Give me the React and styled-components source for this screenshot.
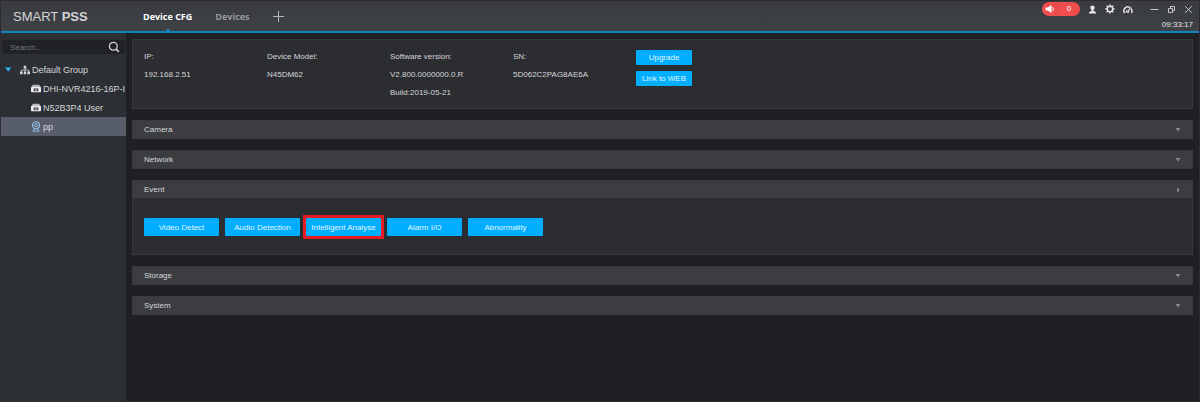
import React from "react";
import styled, { createGlobalStyle } from "styled-components";

const GlobalStyle = createGlobalStyle`
  * {
    box-sizing: border-box;
  }

  body {
    margin: 0;
    background: #1f2023;
    color: #d6d7d9;
    font-family: "Liberation Sans", Arial, sans-serif;
    font-size: 8px;
  }

  button,
  input {
    font-family: inherit;
    font-size: inherit;
  }
`;

const Window = styled.div`
  display: flex;
  flex-direction: column;
  min-height: 100vh;
  border: 1px solid #2b2d31;
`;

const Header = styled.header`
  display: flex;
  height: 32px;
  background: linear-gradient(#393b3f, #3e4146);
  border-bottom: 2px solid #0e86bd;
`;

const Logo = styled.h1`
  width: 130px;
  margin: 0;
  padding-left: 12px;
  color: #d3d4d6;
  font-size: 13px;
  font-weight: normal;
  line-height: 32px;
`;

const Tabs = styled.nav`
  display: flex;
  flex: 1;
  gap: 23px;
  padding-left: 12px;
`;

const Tab = styled.button`
  position: relative;
  padding: 0;
  border: 0;
  background: none;
  color: ${(props) => (props.$active ? "#ffffff" : "#96989c")};
  font-family: "Open Sans", "Noto Sans", sans-serif;
  font-size: 9px;
  font-weight: bold;
  white-space: nowrap;

  &::after {
    content: "";
    display: ${(props) => (props.$active ? "block" : "none")};
    position: absolute;
    left: 50%;
    bottom: 0;
    margin-left: -2px;
    border: 2px solid transparent;
    border-top: 0;
    border-bottom-color: #0fa5ea;
  }
`;

const IconButton = styled.button`
  display: flex;
  align-items: center;
  justify-content: center;
  padding: 0;
  border: 0;
  background: none;
  color: ${(props) => props.$color || "#e4e5e6"};
`;

const Status = styled.div`
  display: flex;
  flex-direction: column;
  justify-content: space-between;
  padding: 1px 6px 1px 0;
`;

const Tools = styled.div`
  display: flex;
  align-items: center;
  gap: 8px;
`;

const WindowButtons = styled.div`
  display: flex;
  gap: 8px;
  margin-left: 9px;
`;

const Alarm = styled.button`
  display: flex;
  align-items: center;
  width: 38px;
  height: 14px;
  padding: 0;
  border: 0;
  border-radius: 7px;
  background: #f04d4f;
  color: #ffffff;
  overflow: hidden;

  svg {
    margin-left: 3px;
  }

  span {
    flex: 1;
    margin-left: 2px;
    border-left: 1px solid #d9484b;
    line-height: 14px;
  }
`;

const Clock = styled.time`
  color: #e4e5e6;
  line-height: 10px;
  text-align: right;
`;

const Content = styled.div`
  display: flex;
  flex: 1;
`;

const Sidebar = styled.aside`
  width: 125px;
  flex-shrink: 0;
  padding-top: 7px;
  background: #2c2f33;
`;

const SearchBox = styled.label`
  display: flex;
  align-items: center;
  height: 14px;
  margin: 0 1px;
  padding: 0 5px 0 8px;
  background: #202226;
  border-radius: 2px;
  color: #d3d4d6;
`;

const SearchInput = styled.input`
  flex: 1;
  min-width: 0;
  padding: 0;
  border: 0;
  outline: 0;
  background: none;
  color: #d6d7d9;

  &::placeholder {
    color: #75777b;
    opacity: 1;
  }
`;

const Tree = styled.ul`
  margin: 6px 0 0;
  padding: 0;
  list-style: none;
`;

const TreeItem = styled.li`
  display: flex;
  align-items: center;
  gap: 2px;
  height: 19px;
  padding-left: ${(props) => (props.$root ? "3px" : "30px")};
  background: ${(props) => (props.$selected ? "#585e69" : "none")};
  font-size: 9px;
  white-space: nowrap;

  svg {
    flex-shrink: 0;
  }
`;

const Expander = styled.span`
  width: 14px;
  color: #2fb4f5;
  line-height: 0;
`;

const Main = styled.main`
  display: flex;
  flex: 1;
  flex-direction: column;
  gap: 11px;
  min-width: 0;
  padding: 6px 6px 11px;
`;

const Info = styled.section`
  display: grid;
  grid-template-columns: repeat(4, 123px) 56px;
  padding: 8px 11px 6px;
  background: #2b2d31;
  border: 1px solid #37393d;
`;

const InfoList = styled.dl`
  margin: 0;
  line-height: 18px;

  dd {
    margin: 0;
  }
`;

const InfoActions = styled.div`
  display: flex;
  flex-direction: column;
  gap: 6px;
  padding-top: 2px;
`;

const Button = styled.button`
  width: ${(props) => (props.$small ? "56px" : "75px")};
  height: ${(props) => (props.$small ? "15px" : "18px")};
  padding: 0;
  border: 0;
  border-radius: ${(props) => (props.$marked ? "0" : "1px")};
  background: #00aeff;
  color: #e2f5ff;
  white-space: nowrap;
  outline: ${(props) => (props.$marked ? "3px solid #e81a22" : "none")};
`;

const Section = styled.section`
  background: #2b2d31;
  border: 1px solid #37393d;
`;

const SectionHeader = styled.button`
  display: flex;
  align-items: center;
  justify-content: space-between;
  width: 100%;
  height: 17px;
  padding: 0 11px;
  border: 0;
  background: #3b3d41;
  color: #d6d7d9;

  svg {
    color: #88898c;
  }
`;

const SectionBody = styled.div`
  display: flex;
  flex-wrap: wrap;
  gap: 6px;
  padding: 20px 11px 18px;
`;

const details = [
  ["IP:", "192.168.2.51"],
  ["Device Model:", "N45DM62"],
  ["Software version:", "V2.800.0000000.0.R", "Build:2019-05-21"],
  ["SN:", "5D062C2PAG8AE6A"],
];

const sections = [
  { name: "Camera" },
  { name: "Network" },
  {
    name: "Event",
    items: [
      "Video Detect",
      "Audio Detection",
      "Intelligent Analyse",
      "Alarm I/O",
      "Abnormality",
    ],
  },
  { name: "Storage" },
  { name: "System" },
];

const PlusIcon = () => (
  <svg width="11" height="11" viewBox="0 0 11 11" stroke="currentColor">
    <path d="M5.5 0v11M0 5.5h11" />
  </svg>
);

const SpeakerIcon = () => (
  <svg width="10" height="10" viewBox="0 0 10 10" fill="currentColor">
    <path d="M.5 3.5h2.2L6.5 1v8L2.7 6.5H.5z" />
    <path d="M7.4 3.2a2.2 2.2 0 0 1 0 3.6" fill="none" stroke="currentColor" />
  </svg>
);

const UserIcon = () => (
  <svg width="9" height="9" viewBox="0 0 9 9" fill="currentColor">
    <circle cx="4.5" cy="2.7" r="2.2" />
    <path d="M3.5 4h2v2h-2zM1 8.5V7.2l2.5-1.5h2L8 7.2v1.3z" />
  </svg>
);

const GearIcon = () => (
  <svg width="10" height="10" viewBox="0 0 10 10" fill="none" stroke="currentColor">
    <circle cx="5" cy="5" r="2.7" strokeWidth="1.4" />
    <path
      d="M5 .4v1.8M5 7.8v1.8M.4 5h1.8M7.8 5h1.8M1.7 1.7 3 3M7 7l1.3 1.3M8.3 1.7 7 3M3 7 1.7 8.3"
      strokeWidth="1.5"
    />
  </svg>
);

const GaugeIcon = () => (
  <svg width="10" height="9" viewBox="0 0 10 9" fill="none" stroke="currentColor">
    <path d="M1.5 8a4 4 0 0 1 5-5.8M8.2 3.6A4 4 0 0 1 8.5 8" strokeWidth="1.5" />
    <path d="M7.8 2 4.9 7" strokeWidth="1.3" />
    <path d="M3 7.9a2.2 2.2 0 0 1 1.5-2.8" />
    <circle cx="5" cy="7.1" r="1" fill="currentColor" stroke="none" />
  </svg>
);

const MinimizeIcon = () => (
  <svg width="9" height="9" viewBox="0 0 9 9" stroke="currentColor">
    <path d="M.5 4.5h8" />
  </svg>
);

const RestoreIcon = () => (
  <svg width="9" height="9" viewBox="0 0 9 9" fill="none" stroke="currentColor">
    <path d="M1.5 3.5h4v4h-4zM3.5 3.5v-2h4v4h-2" />
  </svg>
);

const CloseIcon = () => (
  <svg width="9" height="9" viewBox="0 0 9 9" stroke="currentColor">
    <path d="m1.2 1.2 6.6 6.6M7.8 1.2 1.2 7.8" />
  </svg>
);

const SearchIcon = () => (
  <svg width="12" height="12" viewBox="0 0 12 12" fill="none" stroke="currentColor">
    <circle cx="5.3" cy="5.2" r="3.9" strokeWidth="1.3" />
    <path d="m8.2 8.2 2.6 2.6" strokeWidth="1.7" />
  </svg>
);

const ExpandedIcon = () => (
  <svg width="8" height="5" viewBox="0 0 8 5" fill="currentColor">
    <path d="M1 .5h6.4L4.2 4.5z" />
  </svg>
);

const GroupIcon = () => (
  <svg width="10" height="10" viewBox="0 0 10 10" fill="currentColor">
    <path d="M3.7.8h2.6v2.6H3.7zM0 6.6h2.6v2.6H0zM3.8 6.6h2.4v2.6H3.8zM7.4 6.6H10v2.6H7.4z" />
    <path d="M5 3.4v3.4M1.4 6.8V5h7.2v1.8" fill="none" stroke="currentColor" strokeWidth=".8" />
  </svg>
);

const RecorderIcon = () => (
  <svg width="10" height="9" viewBox="0 0 10 9">
    <path d="M2 .7h6l2 2.5H0z" fill="#b9babd" />
    <rect y="3" width="10" height="5.2" rx=".8" fill="#eeeeef" />
    <rect x="2.6" y="4.4" width="4.8" height="2.8" fill="#4b4d51" />
    <circle cx="5" cy="5.8" r=".9" fill="#b9babd" />
  </svg>
);

const CameraIcon = () => (
  <svg width="10" height="11" viewBox="0 0 10 11" fill="none" stroke="#93c1ea">
    <circle cx="5" cy="4.3" r="3.5" strokeWidth="1.1" />
    <circle cx="5" cy="4.3" r="1.5" />
    <path d="M3.6 7.7 1.8 10.1h6.4L6.4 7.7" />
  </svg>
);

const Arrow = ({ open }) => (
  <svg width="6" height="6" viewBox="0 0 6 6" fill="currentColor">
    <path d={open ? "M2 .5v5L5 3z" : "M.5 1h5L3 4.4z"} />
  </svg>
);

function TopBar() {
  return (
    <Header>
      <Logo>
        SMART <b>PSS</b>
      </Logo>
      <Tabs>
        <Tab $active>Device CFG</Tab>
        <Tab>Devices</Tab>
        <IconButton $color="#b4b5b8" aria-label="New tab">
          <PlusIcon />
        </IconButton>
      </Tabs>
      <Status>
        <Tools>
          <Alarm aria-label="Alarms">
            <SpeakerIcon />
            <span>0</span>
          </Alarm>
          <IconButton aria-label="User">
            <UserIcon />
          </IconButton>
          <IconButton aria-label="Settings">
            <GearIcon />
          </IconButton>
          <IconButton aria-label="System status">
            <GaugeIcon />
          </IconButton>
          <WindowButtons>
            <IconButton $color="#c6c7c9" aria-label="Minimize">
              <MinimizeIcon />
            </IconButton>
            <IconButton $color="#c6c7c9" aria-label="Restore">
              <RestoreIcon />
            </IconButton>
            <IconButton $color="#c6c7c9" aria-label="Close">
              <CloseIcon />
            </IconButton>
          </WindowButtons>
        </Tools>
        <Clock>09:33:17</Clock>
      </Status>
    </Header>
  );
}

function DeviceTree() {
  return (
    <Sidebar>
      <SearchBox>
        <SearchInput type="text" placeholder="Search.." aria-label="Search" />
        <SearchIcon />
      </SearchBox>
      <Tree>
        <TreeItem $root>
          <Expander>
            <ExpandedIcon />
          </Expander>
          <GroupIcon />
          <span>Default Group</span>
        </TreeItem>
        <TreeItem>
          <RecorderIcon />
          <span>DHI-NVR4216-16P-I</span>
        </TreeItem>
        <TreeItem>
          <RecorderIcon />
          <span>N52B3P4 User</span>
        </TreeItem>
        <TreeItem $selected>
          <CameraIcon />
          <span>pp</span>
        </TreeItem>
      </Tree>
    </Sidebar>
  );
}

export default function App() {
  return (
    <Window>
      <GlobalStyle />
      <TopBar />
      <Content>
        <DeviceTree />
        <Main>
          <Info>
            {details.map(([label, ...values]) => (
              <InfoList key={label}>
                <dt>{label}</dt>
                {values.map((value) => (
                  <dd key={value}>{value}</dd>
                ))}
              </InfoList>
            ))}
            <InfoActions>
              <Button $small>Upgrade</Button>
              <Button $small>Link to WEB</Button>
            </InfoActions>
          </Info>
          {sections.map(({ name, items }) => (
            <Section key={name}>
              <SectionHeader aria-expanded={Boolean(items)}>
                {name}
                <Arrow open={Boolean(items)} />
              </SectionHeader>
              {items && (
                <SectionBody>
                  {items.map((item) => (
                    <Button key={item} $marked={item === "Intelligent Analyse"}>
                      {item}
                    </Button>
                  ))}
                </SectionBody>
              )}
            </Section>
          ))}
        </Main>
      </Content>
    </Window>
  );
}
